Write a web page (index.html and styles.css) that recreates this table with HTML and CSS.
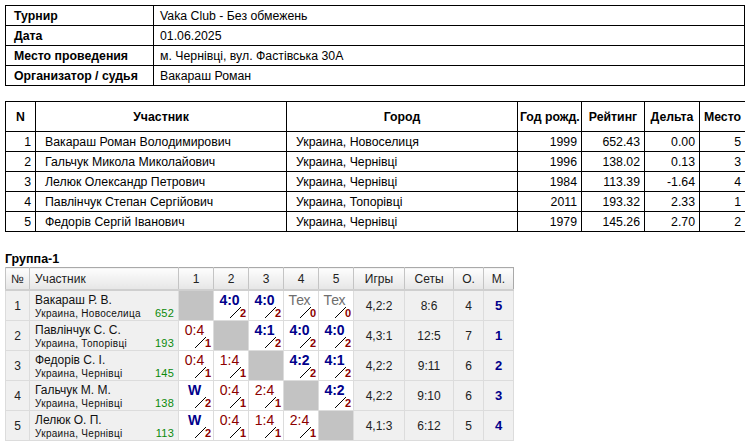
FILE: index.html
```html
<!DOCTYPE html>
<html>
<head>
<meta charset="utf-8">
<link rel="stylesheet" href="styles.css">
</head>
<body>
<table class="info">
  <colgroup><col class="info-k"><col></colgroup>
  <tr><th>Турнир</th><td>Vaka Club - Без обмежень</td></tr>
  <tr><th>Дата</th><td>01.06.2025</td></tr>
  <tr><th>Место проведения</th><td>м. Чернівці, вул. Фастівська 30А</td></tr>
  <tr><th>Организатор / судья</th><td>Вакараш Роман</td></tr>
</table>

<table class="plist">
  <colgroup>
    <col class="p-n"><col class="p-name"><col class="p-city"><col class="p-year"><col class="p-rat"><col class="p-delta"><col class="p-place">
  </colgroup>
  <tr class="phead"><th>N</th><th>Участник</th><th>Город</th><th>Год рожд.</th><th>Рейтинг</th><th>Дельта</th><th>Место</th></tr>
  <tr><td class="r">1</td><td class="l">Вакараш Роман Володимирович</td><td class="l">Украина, Новоселиця</td><td class="r">1999</td><td class="r">652.43</td><td class="r">0.00</td><td class="r">5</td></tr>
  <tr><td class="r">2</td><td class="l">Гальчук Микола Миколайович</td><td class="l">Украина, Чернівці</td><td class="r">1996</td><td class="r">138.02</td><td class="r">0.13</td><td class="r">3</td></tr>
  <tr><td class="r">3</td><td class="l">Лелюк Олександр Петрович</td><td class="l">Украина, Чернівці</td><td class="r">1984</td><td class="r">113.39</td><td class="r">-1.64</td><td class="r">4</td></tr>
  <tr><td class="r">4</td><td class="l">Павлінчук Степан Сергійович</td><td class="l">Украина, Топорівці</td><td class="r">2011</td><td class="r">193.32</td><td class="r">2.33</td><td class="r">1</td></tr>
  <tr><td class="r">5</td><td class="l">Федорів Сергій Іванович</td><td class="l">Украина, Чернівці</td><td class="r">1979</td><td class="r">145.26</td><td class="r">2.70</td><td class="r">2</td></tr>
</table>

<div class="gtitle">Группа-1</div>
<table class="group">
  <colgroup>
    <col class="g-n"><col class="g-name"><col class="g-r"><col class="g-r2"><col class="g-r"><col class="g-r2"><col class="g-r"><col class="g-games"><col class="g-sets"><col class="g-o"><col class="g-m">
  </colgroup>
  <tr class="ghead"><th>№</th><th class="gl">Участник</th><th>1</th><th>2</th><th>3</th><th>4</th><th>5</th><th>Игры</th><th>Сеты</th><th>О.</th><th>М.</th></tr>

  <tr>
    <td class="gn">1</td>
    <td class="gp"><div class="pn">Вакараш Р. В.</div><div class="pc"><span>Украина, Новоселица</span><span class="pr">652</span></div></td>
    <td class="self"></td>
    <td class="res"><div class="sc win">4:0</div><div class="pt"><i class="sl"></i><b>2</b></div></td>
    <td class="res"><div class="sc win">4:0</div><div class="pt"><i class="sl"></i><b>2</b></div></td>
    <td class="res"><div class="sc tech">Тех</div><div class="pt"><i class="sl"></i><b>0</b></div></td>
    <td class="res"><div class="sc tech">Тех</div><div class="pt"><i class="sl"></i><b>0</b></div></td>
    <td class="st">4,2:2</td><td class="st">8:6</td><td class="st">4</td><td class="st pl">5</td>
  </tr>
  <tr>
    <td class="gn">2</td>
    <td class="gp"><div class="pn">Павлінчук С. С.</div><div class="pc"><span>Украина, Топорівці</span><span class="pr">193</span></div></td>
    <td class="res"><div class="sc loss">0:4</div><div class="pt"><i class="sl"></i><b>1</b></div></td>
    <td class="self"></td>
    <td class="res"><div class="sc win">4:1</div><div class="pt"><i class="sl"></i><b>2</b></div></td>
    <td class="res"><div class="sc win">4:0</div><div class="pt"><i class="sl"></i><b>2</b></div></td>
    <td class="res"><div class="sc win">4:0</div><div class="pt"><i class="sl"></i><b>2</b></div></td>
    <td class="st">4,3:1</td><td class="st">12:5</td><td class="st">7</td><td class="st pl">1</td>
  </tr>
  <tr>
    <td class="gn">3</td>
    <td class="gp"><div class="pn">Федорів С. І.</div><div class="pc"><span>Украина, Чернівці</span><span class="pr">145</span></div></td>
    <td class="res"><div class="sc loss">0:4</div><div class="pt"><i class="sl"></i><b>1</b></div></td>
    <td class="res"><div class="sc loss">1:4</div><div class="pt"><i class="sl"></i><b>1</b></div></td>
    <td class="self"></td>
    <td class="res"><div class="sc win">4:2</div><div class="pt"><i class="sl"></i><b>2</b></div></td>
    <td class="res"><div class="sc win">4:1</div><div class="pt"><i class="sl"></i><b>2</b></div></td>
    <td class="st">4,2:2</td><td class="st">9:11</td><td class="st">6</td><td class="st pl">2</td>
  </tr>
  <tr>
    <td class="gn">4</td>
    <td class="gp"><div class="pn">Гальчук М. М.</div><div class="pc"><span>Украина, Чернівці</span><span class="pr">138</span></div></td>
    <td class="res"><div class="sc win">W</div><div class="pt"><i class="sl"></i><b>2</b></div></td>
    <td class="res"><div class="sc loss">0:4</div><div class="pt"><i class="sl"></i><b>1</b></div></td>
    <td class="res"><div class="sc loss">2:4</div><div class="pt"><i class="sl"></i><b>1</b></div></td>
    <td class="self"></td>
    <td class="res"><div class="sc win">4:2</div><div class="pt"><i class="sl"></i><b>2</b></div></td>
    <td class="st">4,2:2</td><td class="st">9:10</td><td class="st">6</td><td class="st pl">3</td>
  </tr>
  <tr>
    <td class="gn">5</td>
    <td class="gp"><div class="pn">Лелюк О. П.</div><div class="pc"><span>Украина, Чернівці</span><span class="pr">113</span></div></td>
    <td class="res"><div class="sc win">W</div><div class="pt"><i class="sl"></i><b>2</b></div></td>
    <td class="res"><div class="sc loss">0:4</div><div class="pt"><i class="sl"></i><b>1</b></div></td>
    <td class="res"><div class="sc loss">1:4</div><div class="pt"><i class="sl"></i><b>1</b></div></td>
    <td class="res"><div class="sc loss">2:4</div><div class="pt"><i class="sl"></i><b>1</b></div></td>
    <td class="self"></td>
    <td class="st">4,1:3</td><td class="st">6:12</td><td class="st">5</td><td class="st pl">4</td>
  </tr>
</table>
</body>
</html>
```

FILE: styles.css
```css
html, body { background: #fff; }
body {
  margin: 5px;
  font-family: "Liberation Sans", Arial, sans-serif;
  color: #000;
}
table { border-collapse: collapse; table-layout: fixed; }

/* info table */
.info { width: 740px; font-size: 12.3px; }
.info .info-k { width: 148px; }
.info th, .info td {
  border: 1px solid #000;
  height: 19px;
  padding: 0 6px;
  text-align: left;
  vertical-align: middle;
}
.info th { font-weight: bold; padding-left: 8px; }

/* participants table */
.plist { width: 740px; margin-top: 15px; font-size: 12.3px; }
.p-n { width: 30px; }
.p-name { width: 251px; }
.p-city { width: 231px; }
.p-year { width: 64px; }
.p-rat { width: 63px; }
.p-delta { width: 55px; }
.p-place { width: 46px; }
.plist th, .plist td {
  border: 1px solid #000;
  height: 19px;
  padding: 0 4px;
  vertical-align: middle;
  white-space: nowrap;
  overflow: hidden;
}
.plist .phead th { height: 29px; font-weight: bold; text-align: center; padding: 0 2px; }
.plist td.r { text-align: right; }
.plist td.l { text-align: left; padding-left: 9px; }

/* group */
.gtitle {
  margin-top: 20px;
  font-weight: bold;
  font-size: 12.5px;
  line-height: 14px;
  height: 14px;
}
.group {
  width: 508px;
  margin-top: 1px;
  font-size: 12px;
  border: 1px solid #a9a9a9;
}
.g-n { width: 24px; }
.g-name { width: 149px; }
.g-r { width: 35px; }
.g-r2 { width: 35px; }
.g-games { width: 51px; }
.g-sets { width: 49px; }
.g-o { width: 30px; }
.g-m { width: 30px; }

.ghead th {
  height: 21px;
  font-weight: normal;
  color: #222;
  text-align: center;
  padding: 0;
  background: linear-gradient(#fdfdfd, #e6e6e6);
  border-left: 1px solid #c4c4c4;
  border-bottom: 2px solid #cfcfcf;
}
.ghead th.gl { text-align: left; padding-left: 5px; }

.group td {
  border: 1px solid #dcdcdc;
  height: 28.5px;
  padding: 0;
  vertical-align: middle;
}
.group td.gn { background: #f0f0f0; text-align: center; color: #222; }
.group td.gp { background: #f0f0f0; height: 26.5px; padding: 2px 4px 0 5px; vertical-align: top; }
.pn { font-size: 12px; line-height: 14px; color: #111; }
.pc { display: flex; justify-content: space-between; align-items: baseline; font-size: 10px; line-height: 12px; }
.pc span:first-child { letter-spacing: 0.3px; color: #111; }
.pr { color: #0a8a0a; font-size: 11px; letter-spacing: 0.2px; }

.group td.self { background: #c3c3c3; }
.group td.res { background: #fff; vertical-align: top; height: 26.5px; padding: 2px 2px 0 4px; }
.sc { font-size: 14px; line-height: 14px; text-align: center; padding-right: 5px; }
.sc.win { font-weight: bold; color: #00008b; }
.sc.loss { color: #8b0000; }
.sc.tech { color: #6e6e6e; }
.pt { display: flex; justify-content: flex-end; align-items: flex-end; margin-top: -1px; height: 12px; }
.sl {
  display: block;
  width: 11px;
  height: 11px;
  background: linear-gradient(to bottom right, transparent calc(50% - 0.7px), #000 50%, transparent calc(50% + 0.7px));
}
.pt b { font-size: 11px; line-height: 9px; color: #8b0000; margin-left: -1px; }

.group td.st { background: #f0f0f0; text-align: center; color: #222; }
.group td.pl { font-weight: bold; color: #00008b; font-size: 13px; }
```
